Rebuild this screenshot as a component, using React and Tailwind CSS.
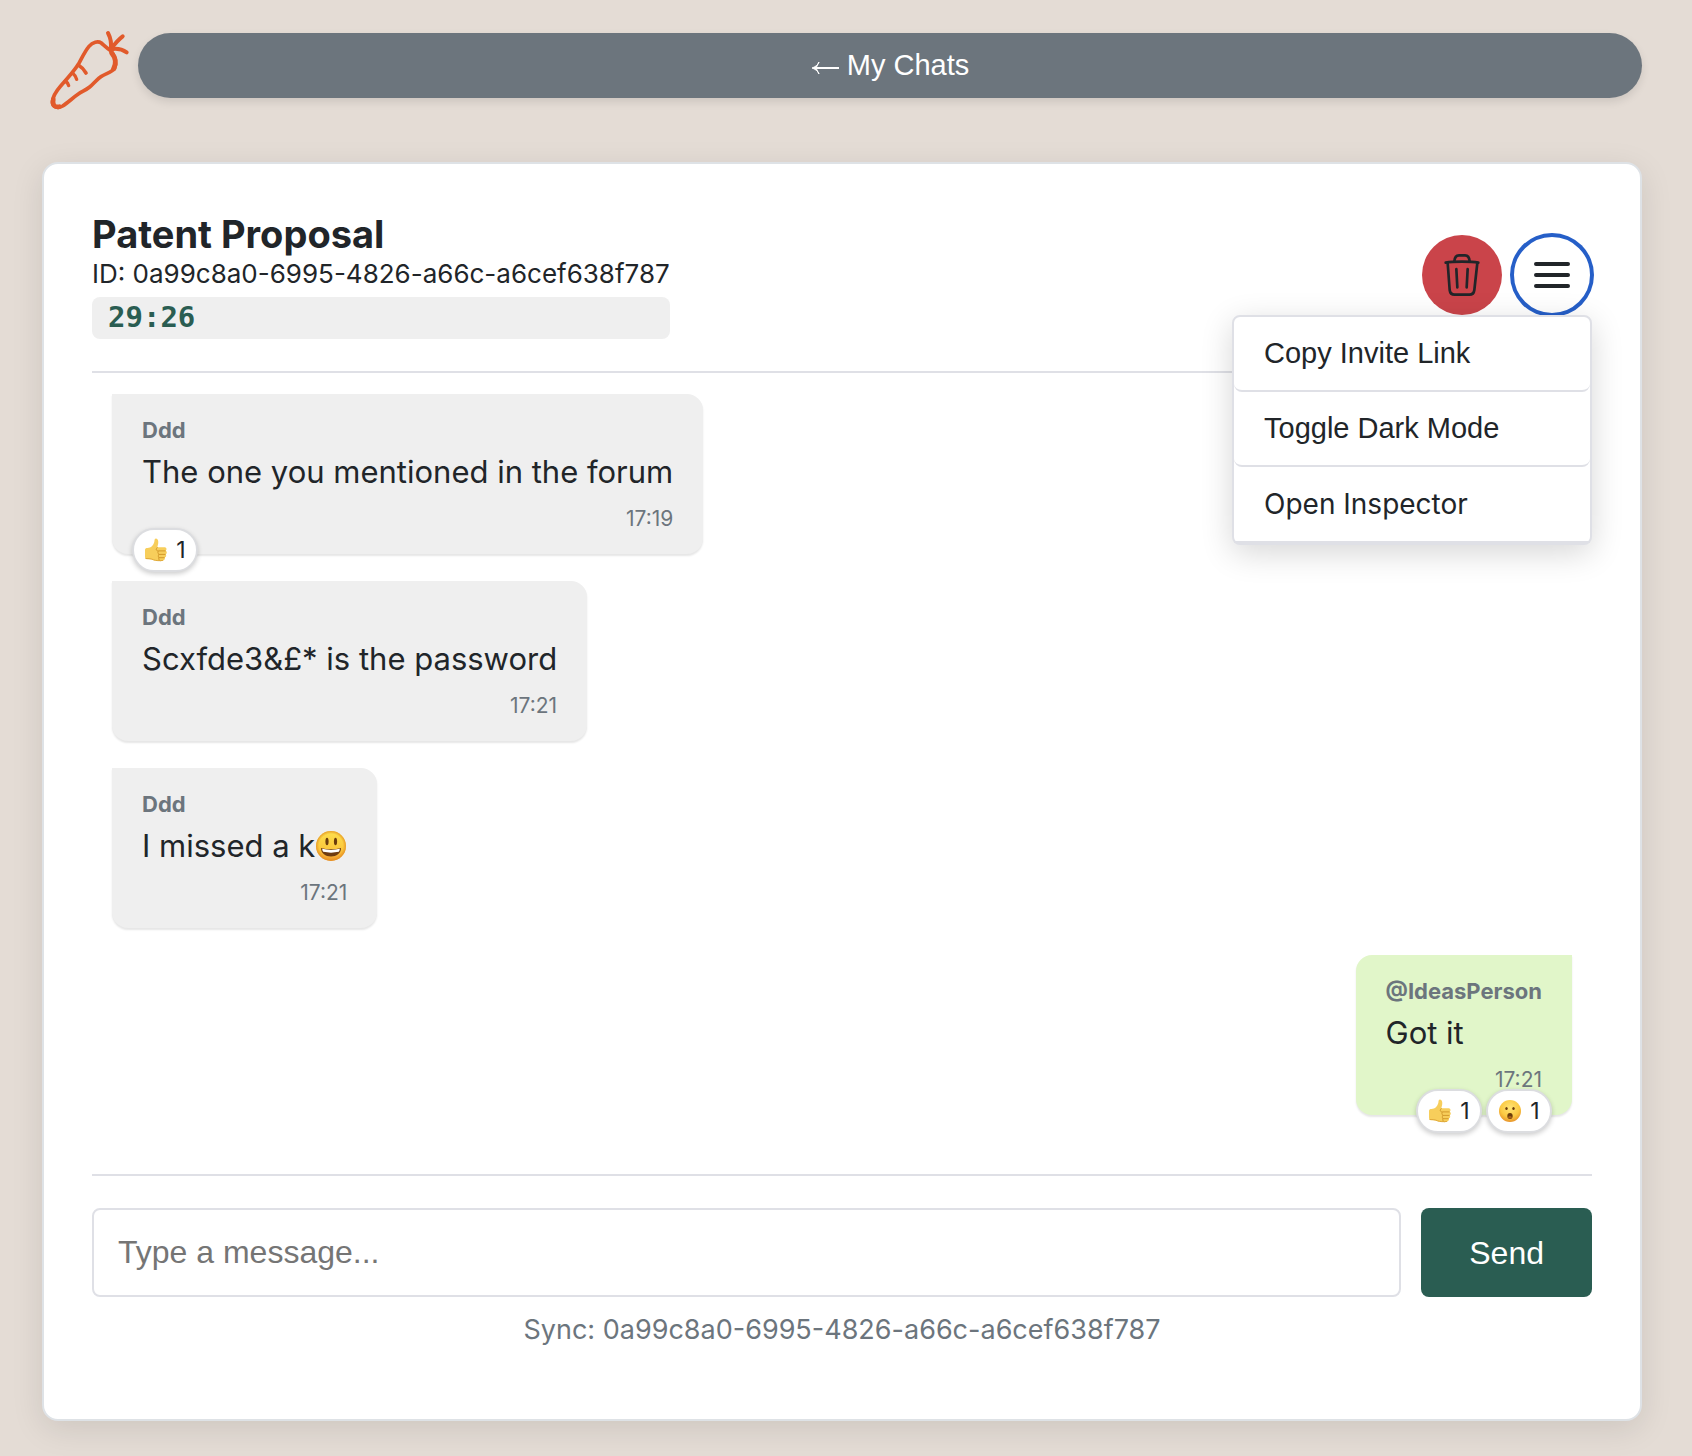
import React, { useState } from "react";

const messages = [
  {
    id: 1,
    name: "Ddd",
    text: "The one you mentioned in the forum",
    time: "17:19",
    reactions: [{ emoji: "thumb", count: 1 }],
  },
  {
    id: 2,
    name: "Ddd",
    text: "Scxfde3&£* is the password",
    time: "17:21",
    reactions: [],
  },
  {
    id: 3,
    name: "Ddd",
    text: "I missed a k",
    smile: true,
    time: "17:21",
    reactions: [],
  },
  {
    id: 4,
    name: "@IdeasPerson",
    text: "Got it",
    time: "17:21",
    mine: true,
    reactions: [
      { emoji: "thumb", count: 1 },
      { emoji: "wow", count: 1 },
    ],
  },
];

const CarrotLogo = () => (
  <svg
    className="w-24 h-[85px] shrink-0 overflow-visible"
    viewBox="36 39 288 255"
    fill="none"
    stroke="#e15a2b"
    strokeLinecap="round"
    strokeLinejoin="round"
    role="img"
    aria-label="Carrot"
  >
    <path
      strokeWidth="11"
      d="M241 121 C231 115 222 106 214 99 C204 92 188 96 177 109 C163 126 155 146 145 163 C132 184 112 206 92 228 C78 244 68 260 67 276 C67 292 84 296 98 288 C115 277 130 262 145 252 C157 244 168 240 179 231 C191 221 200 208 213 200 C229 190 246 187 254 175 C261 158 256 136 241 121 Z"
    />
    <path strokeWidth="15" d="M245 129 C256 142 260 160 251 176" />
    <path strokeWidth="14" d="M70 268 C66 284 74 293 88 290" />
    <path strokeWidth="12" d="M242 118 C245 101 242 84 234 69" />
    <path strokeWidth="12" d="M242 118 C253 103 265 89 278 79" />
    <path strokeWidth="12" d="M242 118 C261 114 277 118 290 127" />
    <path strokeWidth="11" d="M145 165 C155 171 162 179 168 189" />
    <path strokeWidth="10" d="M127 188 C134 194 138 201 140 208" />
    <path strokeWidth="10" d="M106 213 C112 217 115 222 116 227" />
  </svg>
);

const TrashIcon = () => (
  <svg
    className="w-9 h-[42px]"
    viewBox="672 132 108 126"
    fill="none"
    stroke="#212529"
    strokeWidth="8"
    strokeLinecap="round"
    strokeLinejoin="round"
    aria-hidden="true"
  >
    <path d="M677 158 C700 154 752 154 775 158" />
    <path d="M703 154 C704 141 709 136 717 136 H735 C743 136 748 141 749 154" />
    <path d="M683 159 L689 240 C690 249 696 254 704 254 H748 C756 254 762 249 763 240 L772 159" />
    <path d="M709 177 L712 232 M743 177 L740 232" />
  </svg>
);

const MenuIcon = () => (
  <svg
    className="w-[38px] h-7"
    viewBox="0 0 38 28"
    stroke="#212529"
    strokeWidth="4"
    strokeLinecap="round"
    aria-hidden="true"
  >
    <path d="M3 3H35M3 14H35M3 25H35" />
  </svg>
);

const ThumbEmoji = () => (
  <svg className="size-6" viewBox="0 0 24 24" role="img" aria-label="Thumbs up">
    <path
      fill="#f7ce5b"
      d="M1 12 C1 10.500 2 10 3.500 10 C7 10 9.500 7 10.300 4 C10.600 1.500 10.700 0.500 12 0.500 C14 0.700 14.600 3 14.200 5.500 C14 7 13.500 8.300 13.300 9.300 H20.500 C22.500 9.300 23.200 11.800 21.600 12.700 C23.400 13.400 23.200 15.900 21.500 16.300 C22.800 17.200 22.300 19.400 20.600 19.600 C21.400 20.800 20.500 22.700 18.500 22.900 C15.500 23.200 11.500 23 9 22 C7 21 5 21.200 3 21.200 C1.500 21.200 1 20 1 18.500 Z"
    />
    <path
      fill="none"
      stroke="#d39a2c"
      strokeWidth="1"
      strokeLinecap="round"
      d="M15 12.900 H21.300 M15 16.400 H21.200 M15 19.700 H20.300 M13.300 9.500 C11.500 11 12 13 14.500 12.900 C13.600 14 13.700 15.600 15 16.400 C14 17.500 14.200 19 15 19.700 C14.300 21 15 22 16 22.600"
    />
    <path
      fill="none"
      stroke="#e0a93a"
      strokeWidth="1"
      strokeLinecap="round"
      d="M2 20.500 C5 20.600 7 20.500 9.500 21.800 C12 22.700 15.500 22.900 18.500 22.500"
    />
  </svg>
);

const WowEmoji = () => (
  <svg className="size-6" viewBox="0 0 24 24" role="img" aria-label="Surprised">
    <defs>
      <radialGradient id="wowFace" cx="0.5" cy="0.35" r="0.65">
        <stop offset="0" stopColor="#ffe476" />
        <stop offset="0.65" stopColor="#fbc942" />
        <stop offset="1" stopColor="#e8952b" />
      </radialGradient>
    </defs>
    <circle cx="12" cy="12" r="11" fill="url(#wowFace)" />
    <ellipse cx="8.500" cy="9.500" rx="1.200" ry="1.600" fill="#6b3c0c" />
    <ellipse cx="15.500" cy="9.500" rx="1.200" ry="1.600" fill="#6b3c0c" />
    <ellipse cx="12" cy="17" rx="2.700" ry="3" fill="#6b3c0c" />
    <ellipse cx="12" cy="18.300" rx="1.700" ry="1.200" fill="#a8611f" />
  </svg>
);

const SmileEmoji = () => (
  <svg className="size-8 shrink-0" viewBox="0 0 32 32" role="img" aria-label="Smile">
    <defs>
      <linearGradient id="smileFace" x1="0" y1="0" x2="0" y2="1">
        <stop offset="0" stopColor="#fde04e" />
        <stop offset="0.6" stopColor="#fcc83d" />
        <stop offset="1" stopColor="#f0982c" />
      </linearGradient>
      <radialGradient id="smileRim" cx="0.5" cy="0.5" r="0.5">
        <stop offset="0.8" stopColor="#e08a1e" stopOpacity="0" />
        <stop offset="1" stopColor="#e08a1e" stopOpacity="0.75" />
      </radialGradient>
    </defs>
    <circle cx="16" cy="16" r="15" fill="url(#smileFace)" />
    <circle cx="16" cy="16" r="15" fill="url(#smileRim)" />
    <ellipse cx="12" cy="11.500" rx="1.600" ry="3.800" fill="#6b3c0c" />
    <ellipse cx="20.500" cy="11.500" rx="1.600" ry="3.800" fill="#6b3c0c" />
    <path
      fill="#6f3b10"
      d="M6 18 C12 19.800 20 19.800 26 18 C26 23.500 21.500 26.500 16 26.500 C10.500 26.500 6 23.500 6 18 Z"
    />
    <path
      fill="#ffffff"
      d="M7.200 18.800 C13 20.300 19 20.300 24.800 18.800 C24.700 20.500 24.300 21.300 23.800 21.800 C18.500 22.900 13.500 22.900 8.200 21.800 C7.700 21.300 7.300 20.500 7.200 18.800 Z"
    />
  </svg>
);

const Message = ({ message }) => {
  const { name, text, time, smile, mine, reactions } = message;

  return (
    <li
      className={
        mine
          ? "relative self-end bg-[#e1f6c9] rounded-2xl rounded-tr-none px-[30px] pt-5 pb-[23px] shadow-[0_2px_2px_rgba(0,0,0,0.1)]"
          : "relative self-start bg-[#efefef] rounded-2xl rounded-tl-none px-[30px] pt-5 pb-[23px] shadow-[0_2px_2px_rgba(0,0,0,0.1)]"
      }
    >
      <div className="text-[22px] leading-[33px] font-bold text-[#6c757d]">{name}</div>
      <div className="flex items-center text-[31px] leading-[50px]">
        {text}
        {smile && <SmileEmoji />}
      </div>
      <div className="mt-2.5 text-[21px] leading-6 text-right text-[#6c757d]">{time}</div>

      {reactions.length > 0 && (
        <div
          className={
            mine
              ? "absolute right-5 -bottom-[18px] flex gap-1"
              : "absolute left-5 -bottom-[18px] flex gap-1"
          }
        >
          {reactions.map((r) => (
            <button
              key={r.emoji}
              type="button"
              className="h-11 w-[66px] flex items-center justify-center gap-2 bg-white border-2 border-[#dcdde0] rounded-[22px] text-[23px] shadow-[0_2px_5px_rgba(0,0,0,0.2)]"
            >
              {r.emoji === "thumb" ? <ThumbEmoji /> : <WowEmoji />}
              <span>{r.count}</span>
            </button>
          ))}
        </div>
      )}
    </li>
  );
};

const App = () => {
  const [draft, setDraft] = useState("");
  const chatId = "0a99c8a0-6995-4826-a66c-a6cef638f787";

  return (
    <div className="min-h-screen bg-[#e4dcd5] text-[#212529] font-['Inter',sans-serif] pl-[42px] pr-[50px] pt-[23px] pb-[35px]">
      {/* Top bar */}
      <header className="flex items-center">
        <CarrotLogo />
        <button
          type="button"
          className="flex-1 h-[65px] rounded-full bg-[#6c757d] text-white text-[29px] font-['Liberation_Sans',sans-serif] flex items-center justify-center gap-2 shadow-[0_4px_8px_rgba(0,0,0,0.1)]"
        >
          <svg
            className="w-7 h-4 mt-1"
            viewBox="0 0 28 16"
            fill="none"
            stroke="currentColor"
            strokeWidth="2"
            aria-hidden="true"
          >
            <path d="M28 8H3" />
            <path d="M8 2C7 5 4 7 1 8C4 9 7 11 8 14L5 8Z" fill="currentColor" strokeWidth="1" />
          </svg>
          My Chats
        </button>
      </header>

      {/* Chat card */}
      <main className="mt-[54px] bg-white border-2 border-[#dee2e6] rounded-2xl px-12 pt-[47px] pb-[69px] shadow-[0_8px_32px_rgba(0,0,0,0.1)]">
        <div className="flex items-center justify-between pb-8 border-b-2 border-[#dfe0e6]">
          <div>
            <h1 className="text-[38px] leading-[47px] font-bold">Patent Proposal</h1>
            <p className="text-[26px] leading-8">ID: {chatId}</p>
            <div className="mt-[7px] h-[42px] px-4 flex items-center rounded-lg bg-[#efefef] text-[#2a5d52] text-[29px] font-bold font-['DejaVu_Sans_Mono',monospace]">
              29:26
            </div>
          </div>

          <div className="relative flex gap-2.5">
            <button
              type="button"
              aria-label="Delete chat"
              className="size-20 rounded-full bg-[#ca444a] flex items-center justify-center"
            >
              <TrashIcon />
            </button>
            <button
              type="button"
              aria-label="Menu"
              className="size-20 rounded-full bg-white border-2 border-[#265fc8] ring-2 ring-[#265fc8] flex items-center justify-center"
            >
              <MenuIcon />
            </button>

            <div className="absolute top-full right-0 w-[360px] bg-white border-2 border-[#dfe0e6] rounded-lg text-[29px] shadow-[0_8px_32px_rgba(0,0,0,0.16)]">
              <button
                type="button"
                className="w-full h-[75px] px-[30px] text-left border-b-2 border-[#dfe0e6] rounded-lg font-['Liberation_Sans',sans-serif]"
              >
                Copy Invite Link
              </button>
              <button
                type="button"
                className="w-full h-[75px] px-[30px] text-left border-b-2 border-[#dfe0e6] rounded-lg font-['Liberation_Sans',sans-serif]"
              >
                Toggle Dark Mode
              </button>
              <a
                href="#inspector"
                className="flex items-center h-[76px] px-[30px] border-b-2 border-[#dfe0e6] text-[28px]"
              >
                Open Inspector
              </a>
            </div>
          </div>
        </div>

        <ul className="flex flex-col gap-[27px] px-5 pt-[21px] pb-[59px]">
          {messages.map((m) => (
            <Message key={m.id} message={m} />
          ))}
        </ul>

        {/* Composer */}
        <form
          className="flex gap-5 pt-8 border-t-2 border-[#dfe0e6] text-[32px] font-['Liberation_Sans',sans-serif]"
          onSubmit={(e) => {
            e.preventDefault();
            setDraft("");
          }}
        >
          <input
            type="text"
            aria-label="Message"
            placeholder="Type a message..."
            value={draft}
            onChange={(e) => setDraft(e.target.value)}
            className="flex-1 min-w-0 h-[89px] px-6 bg-white border-2 border-[#dfe0e6] rounded-lg placeholder:text-[#757575]"
          />
          <button type="submit" className="px-12 rounded-lg bg-[#2a5d52] text-white">
            Send
          </button>
        </form>

        <p className="mt-[13px] text-center text-[27px] leading-10 text-[#6c757d]">Sync: {chatId}</p>
      </main>
    </div>
  );
};

export default App;
